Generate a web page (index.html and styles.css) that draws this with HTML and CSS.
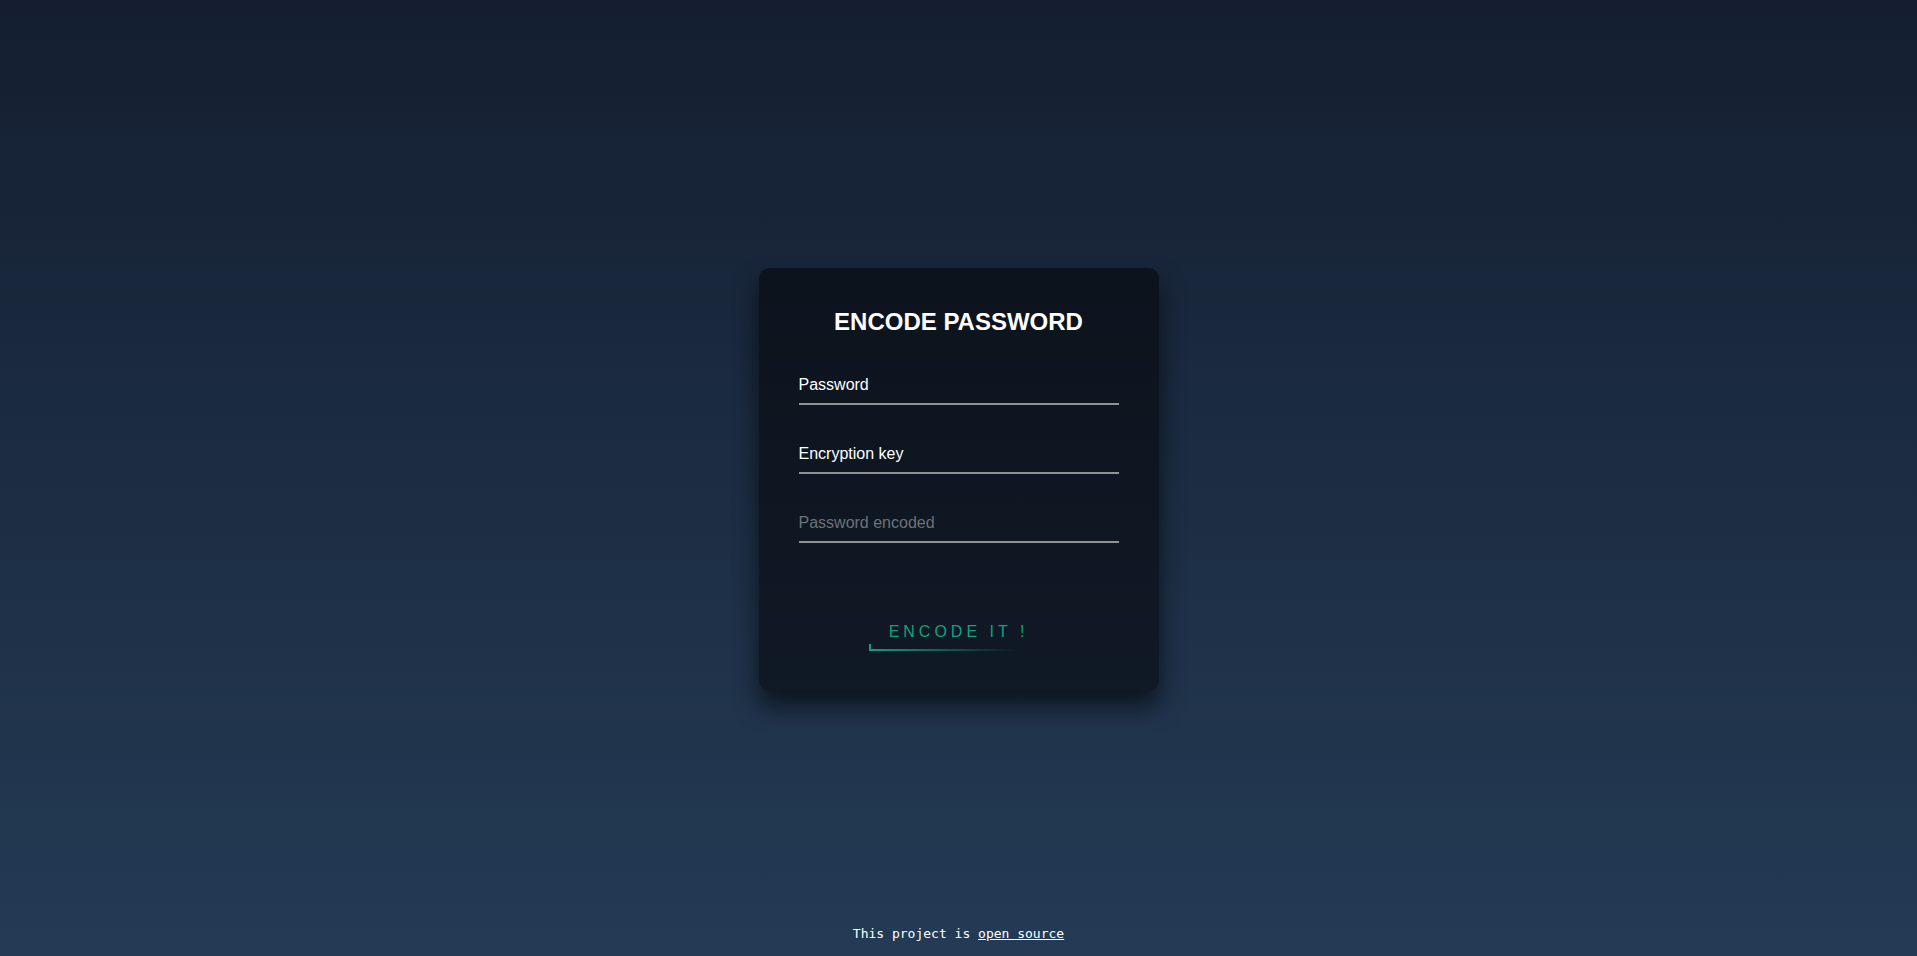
FILE: index.html
```html
<!DOCTYPE html>
<html lang="en">
<head>
<meta charset="utf-8">
<title>Encode password</title>
<link rel="stylesheet" href="styles.css">
</head>
<body>
<main class="page">
  <div class="card">
    <h2 class="title">ENCODE PASSWORD</h2>
    <form class="form">
      <div class="field"><input class="input" type="text" placeholder="Password" value="Password"></div>
      <div class="field"><input class="input" type="text" value="Encryption key"></div>
      <div class="field"><input class="input output" type="text" placeholder="Password encoded"></div>
      <div class="actions">
        <a class="btn" href="#">
          <span class="edge edge-bottom"></span>
          <span class="edge edge-left"></span>
          Encode it !
        </a>
      </div>
    </form>
  </div>
</main>
<footer class="footer">This project is <a class="footer-link" href="#">open source</a></footer>
</body>
</html>
```
FILE: styles.css
```css
html, body {
  margin: 0;
  padding: 0;
  height: 100%;
}
body {
  background: linear-gradient(#141e30, #243b55);
  font-family: "Liberation Sans", Arial, sans-serif;
  display: flex;
  flex-direction: column;
  min-height: 956px;
  overflow: hidden;
}
.page {
  flex: 1;
  display: flex;
  align-items: center;
  justify-content: center;
  padding-top: 32px;
}
.card {
  width: 320px;
  padding: 40px;
  background: rgba(0, 0, 0, 0.5);
  box-shadow: 0 15px 25px rgba(0, 0, 0, 0.6);
  border-radius: 10px;
  box-sizing: content-box;
}
.title {
  margin: 0 0 30px;
  padding: 0;
  color: #fff;
  text-align: center;
  font-size: 24px;
  font-weight: bold;
}
.form {
  margin: 0;
}
.field {
  margin-bottom: 30px;
}
.input {
  display: block;
  width: 100%;
  box-sizing: border-box;
  padding: 10px 0 9px;
  font-family: "Liberation Sans", Arial, sans-serif;
  font-size: 16px;
  line-height: 18px;
  color: #fff;
  border: none;
  border-bottom: 2px solid #8f9297;
  outline: none;
  background: transparent;
}
.input::placeholder {
  color: #6f7277;
}
.actions {
  display: flex;
  justify-content: center;
  margin-top: 70px;
}
.btn {
  position: relative;
  display: inline-block;
  padding: 10px 20px;
  color: #10a37c;
  font-size: 16px;
  line-height: 18px;
  text-decoration: none;
  text-transform: uppercase;
  letter-spacing: 4px;
  overflow: hidden;
}
.edge {
  position: absolute;
  display: block;
}
.edge-bottom {
  left: 0;
  bottom: 0;
  width: 82%;
  height: 2px;
  background: linear-gradient(90deg, #10a37c, transparent);
}
.edge-left {
  left: 0;
  bottom: 0;
  width: 2px;
  height: 7px;
  background: #10a37c;
}
.footer {
  text-align: center;
  color: #fff;
  font-family: "DejaVu Sans Mono", "Liberation Mono", monospace;
  font-size: 13px;
  line-height: 16px;
  padding: 0 0 14px;
}
.footer-link {
  color: #fff;
  text-decoration: underline;
}
```
